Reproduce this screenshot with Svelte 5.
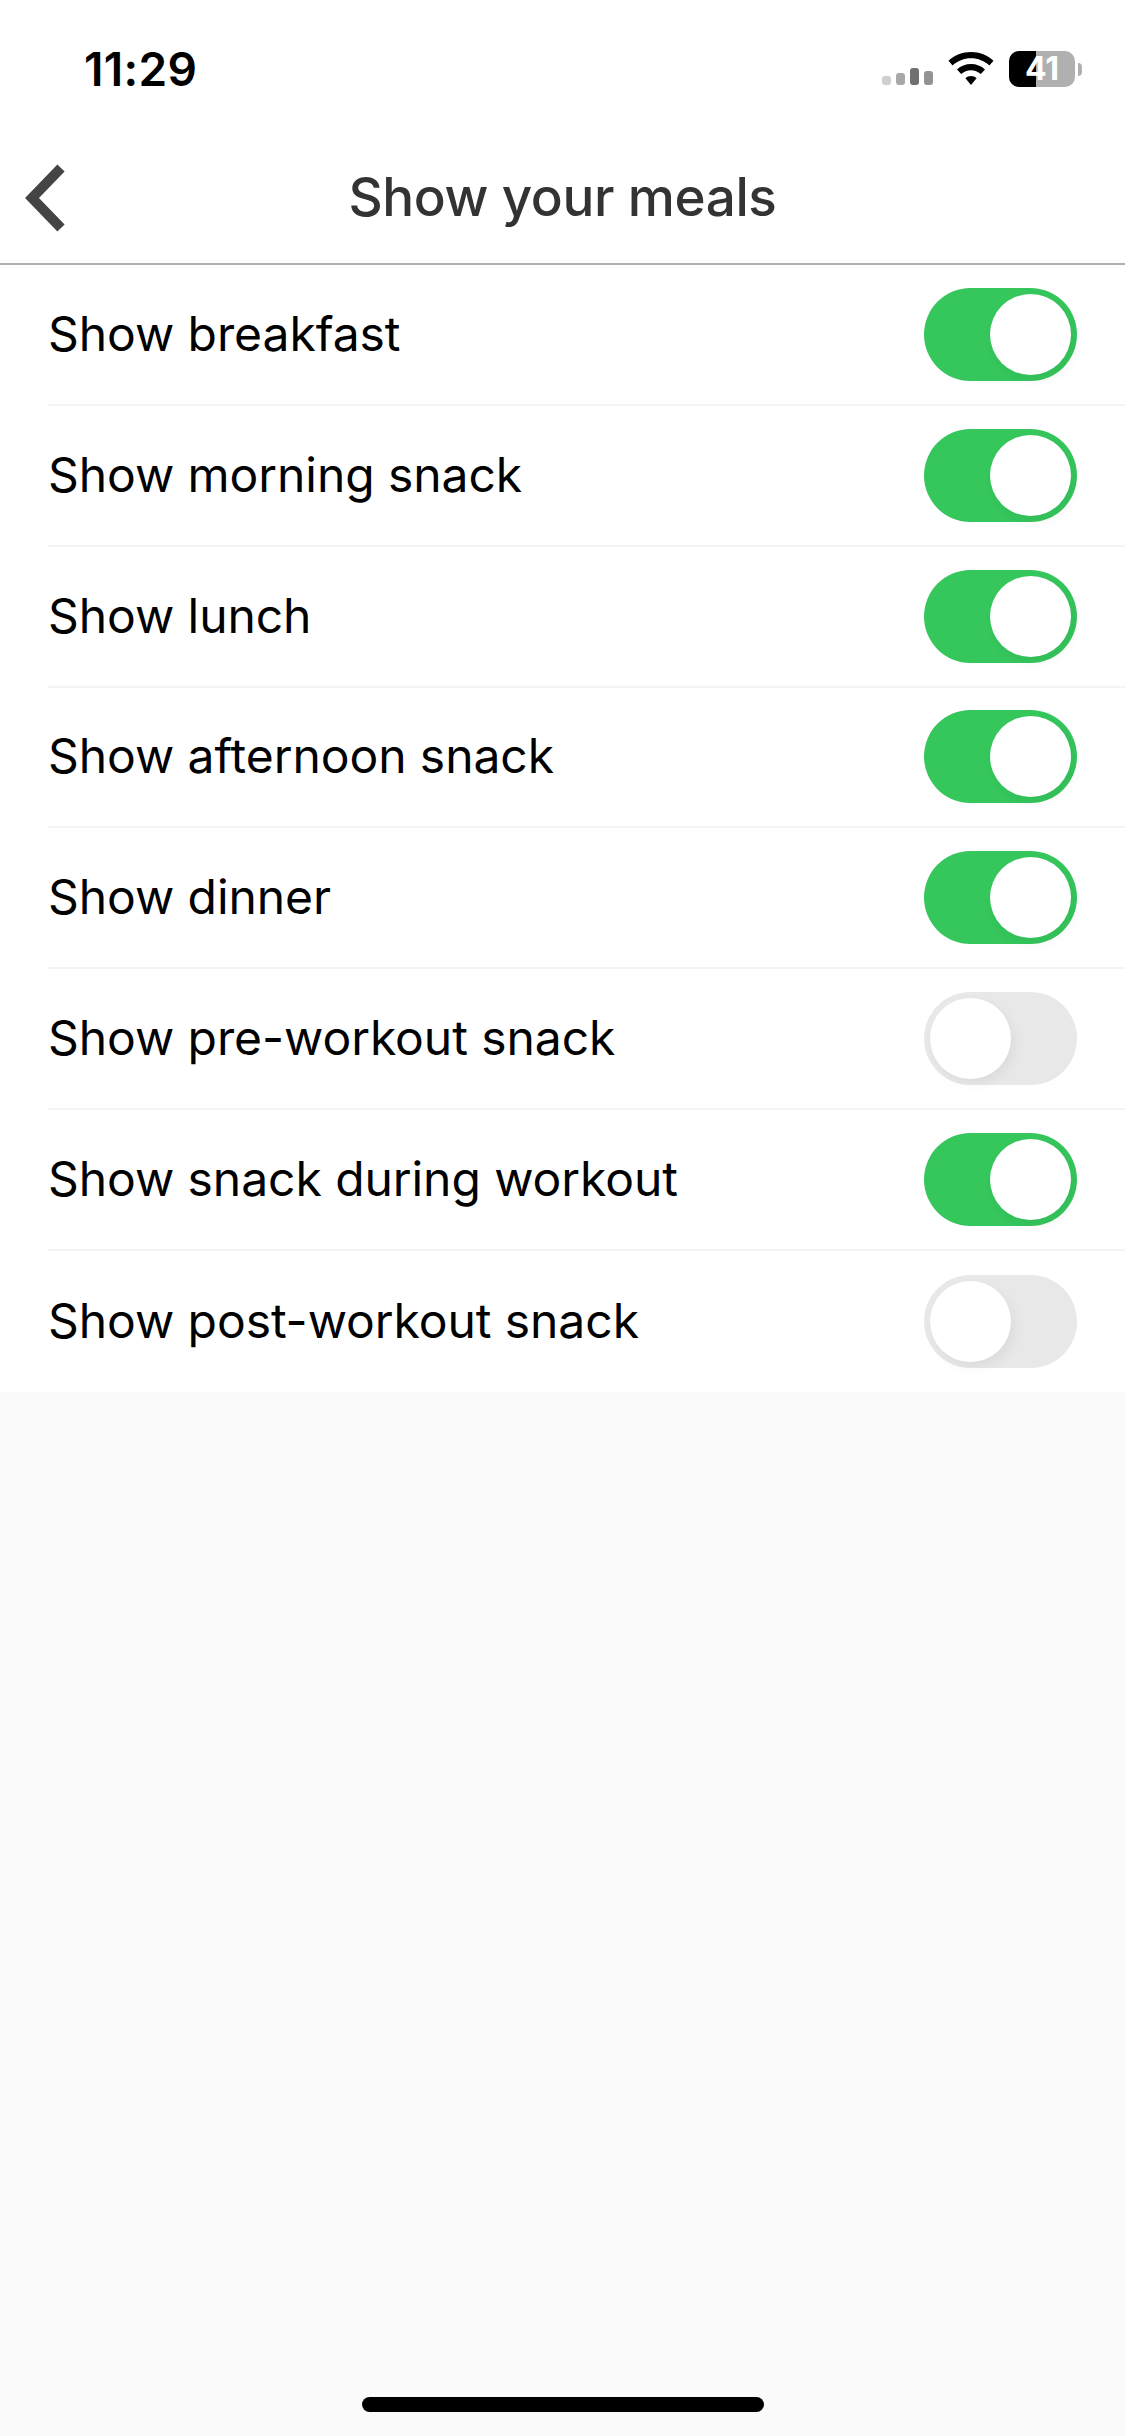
<script>
  const meals = [
    { label: 'Show breakfast', on: true },
    { label: 'Show morning snack', on: true },
    { label: 'Show lunch', on: true },
    { label: 'Show afternoon snack', on: true },
    { label: 'Show dinner', on: true },
    { label: 'Show pre-workout snack', on: false },
    { label: 'Show snack during workout', on: true },
    { label: 'Show post-workout snack', on: false }
  ];
</script>

<div class="page">
  <header class="status">
    <span class="time">11:29</span>
    <div class="indicators">
      <div class="cell">
        <i class="b1"></i><i class="b2"></i><i class="b3"></i><i class="b4"></i>
      </div>
      <svg class="wifi" width="46" height="34" viewBox="0 0 46 34">
        <path d="M23 0C14.300 0 6.500 3.300 0.500 8.800L4.600 13.400C9.500 8.900 16 6.200 23 6.200S36.500 8.900 41.400 13.400L45.500 8.800C39.500 3.300 31.700 0 23 0Z" fill="#000"/>
        <path d="M23 12C17.600 12 12.800 14 9 17.400L13.200 22C15.900 19.600 19.300 18.200 23 18.200S30.100 19.600 32.800 22L37 17.400C33.200 14 28.400 12 23 12Z" fill="#000"/>
        <path d="M23 24C20.800 24 18.900 24.800 17.400 26.200L23 33L28.600 26.200C27.100 24.800 25.200 24 23 24Z" fill="#000"/>
      </svg>
      <div class="battery">
        <div class="shell">
          <div class="level"></div>
          <span class="pct">41</span>
        </div>
        <div class="nub"></div>
      </div>
    </div>
  </header>

  <nav class="nav">
    <svg class="back" width="42" height="68" viewBox="0 0 42 68">
      <path d="M37 4L8 34L37 64" fill="none" stroke="#444" stroke-width="10"/>
    </svg>
    <h1>Show your meals</h1>
  </nav>

  <ul class="list">
    {#each meals as meal}
      <li class="row">
        <span class="label">{meal.label}</span>
        <div class="switch" class:on={meal.on}><div class="knob"></div></div>
      </li>
    {/each}
  </ul>

  <div class="rest">
    <div class="home"></div>
  </div>
</div>

<style>
  :global(body) {
    margin: 0;
    background: #fafafa;
  }
  .page {
    width: 1125px;
    height: 2436px;
    display: flex;
    flex-direction: column;
    font-family: Inter, "Liberation Sans", sans-serif;
    overflow: hidden;
  }
  .status {
    height: 126px;
    flex: none;
    box-sizing: border-box;
    padding: 0 43px 0 84px;
    display: flex;
    justify-content: space-between;
    background: #fff;
  }
  .time {
    font-size: 46px;
    line-height: 54px;
    margin-top: 42px;
    font-weight: 600;
    color: #000;
    letter-spacing: 0.3px;
  }
  .indicators {
    display: flex;
    align-items: flex-start;
    margin-top: 51px;
  }
  .cell {
    display: flex;
    align-items: flex-end;
    gap: 5px;
    height: 34px;
    margin-right: 15px;
  }
  .cell i {
    display: block;
    width: 9px;
    border-radius: 3px;
  }
  .b1 { height: 9px; background: #cfcfcf; }
  .b2 { height: 12px; background: #a8a8a8; }
  .b3 { height: 17px; background: #707070; }
  .b4 { height: 14px; background: #939393; }
  .wifi {
    margin-right: 15px;
    margin-top: 1px;
  }
  .battery {
    display: flex;
    align-items: center;
    gap: 3px;
  }
  .shell {
    position: relative;
    width: 66px;
    height: 36px;
    border-radius: 10px;
    background: #b0b0b0;
    display: flex;
    align-items: center;
    justify-content: center;
  }
  .level {
    position: absolute;
    left: 0;
    top: 0;
    bottom: 0;
    width: 27px;
    background: #000;
    border-radius: 10px 0 0 10px;
  }
  .pct {
    position: relative;
    color: #fff;
    font-size: 32px;
    font-weight: 700;
    line-height: 36px;
  }
  .nub {
    width: 4px;
    height: 13px;
    background: #b0b0b0;
    border-radius: 0 4px 4px 0;
  }
  .nav {
    height: 139px;
    flex: none;
    box-sizing: border-box;
    border-bottom: 2px solid #b0b0b0;
    background: #fff;
    display: flex;
    align-items: center;
    justify-content: center;
    position: relative;
  }
  .back {
    position: absolute;
    left: 24px;
    top: 38px;
  }
  h1 {
    margin: 6px 0 0;
    font-size: 53px;
    font-weight: 500;
    color: #333;
    line-height: 1;
    letter-spacing: -0.4px;
  }
  .list {
    list-style: none;
    margin: 0;
    padding: 0 0 0 48px;
    background: #fff;
    flex: none;
  }
  .row {
    height: 140.85px;
    box-sizing: border-box;
    padding-right: 48px;
    display: flex;
    align-items: center;
    justify-content: space-between;
    border-bottom: 2px solid #f4f4f4;
  }
  .row:last-child {
    border-bottom: 0;
  }
  .label {
    font-size: 48px;
    color: #000;
    letter-spacing: -0.06px;
    margin-top: -2px;
  }
  .switch {
    width: 153px;
    height: 93px;
    box-sizing: border-box;
    padding: 6px;
    border-radius: 47px;
    background: #e8e8e8;
    display: flex;
    justify-content: flex-start;
  }
  .switch.on {
    background: #35c65c;
    justify-content: flex-end;
  }
  .knob {
    width: 81px;
    height: 81px;
    border-radius: 50%;
    background: #fff;
    box-shadow: 4px 5px 12px rgba(0, 0, 0, 0.05);
  }
  .rest {
    flex: 1;
    background: #fafafa;
    display: flex;
    justify-content: center;
    align-items: flex-end;
    padding-bottom: 24px;
  }
  .home {
    width: 402px;
    height: 15px;
    border-radius: 8px;
    background: #000;
  }
</style>
